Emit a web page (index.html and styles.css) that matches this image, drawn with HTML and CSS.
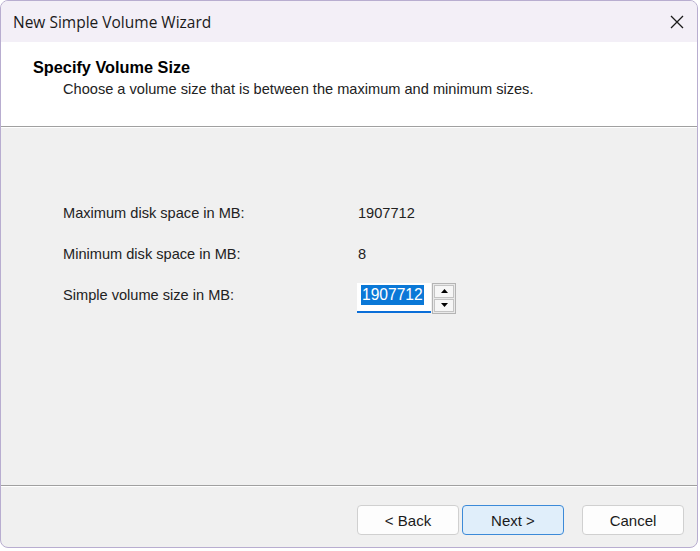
FILE: index.html
```html
<!DOCTYPE html>
<html lang="en">
<head>
    <meta charset="UTF-8">
    <title>New Simple Volume Wizard</title>
    <link rel="stylesheet" href="styles.css">
</head>
<body>
    <div class="window">
        <div class="titlebar">
            <span class="title">New Simple Volume Wizard</span>
            <svg class="close" width="16" height="16" viewBox="0 0 16 16">
                <path d="M2 2 L14 14 M14 2 L2 14" stroke="#1a1a1a" stroke-width="1.3" fill="none"/>
            </svg>
        </div>

        <header class="page-head">
            <h1>Specify Volume Size</h1>
            <p>Choose a volume size that is between the maximum and minimum sizes.</p>
        </header>

        <section class="content">
            <div class="row">
                <span class="label">Maximum disk space in MB:</span>
                <span class="value">1907712</span>
            </div>
            <div class="row">
                <span class="label">Minimum disk space in MB:</span>
                <span class="value">8</span>
            </div>
            <div class="row">
                <span class="label">Simple volume size in MB:</span>
                <div class="spin">
                    <div class="spin-field"><span class="selected">1907712</span></div>
                    <div class="spin-buttons">
                        <button class="spin-btn"><svg width="7" height="4" viewBox="0 0 7 4"><path d="M3.5 0 L7 4 L0 4 Z" fill="#000"/></svg></button>
                        <button class="spin-btn"><svg width="7" height="4" viewBox="0 0 7 4"><path d="M0 0 L7 0 L3.5 4 Z" fill="#000"/></svg></button>
                    </div>
                </div>
            </div>
        </section>

        <footer class="actions">
            <button class="btn">&lt; Back</button>
            <button class="btn default">Next &gt;</button>
            <button class="btn cancel">Cancel</button>
        </footer>
    </div>
</body>
</html>
```

FILE: styles.css
```css
html, body {
    margin: 0;
    padding: 0;
    background: #fff;
}
body {
    font-family: 'Liberation Sans', Arial, sans-serif;
    color: #1a1a1a;
}
.window {
    width: 698px;
    height: 548px;
    box-sizing: border-box;
    border: 1px solid #b8add0;
    border-radius: 8px;
    overflow: hidden;
    display: flex;
    flex-direction: column;
    background: #f0f0f0;
}
.titlebar {
    height: 41px;
    background: #f3eff7;
    display: flex;
    align-items: center;
    justify-content: space-between;
    padding: 0 12px 0 12px;
    flex-shrink: 0;
}
.title {
    font-family: 'Open Sans', 'Noto Sans', sans-serif;
    font-size: 15.5px;
    color: #1a1a1a;
}
.close {
    margin-top: 1px;
}
.page-head {
    height: 84px;
    background: #fff;
    border-bottom: 1px solid #a0a0a0;
    box-shadow: 0 1px 0 #fff;
    flex-shrink: 0;
}
.page-head h1 {
    margin: 16px 0 0 32px;
    font-size: 16.3px;
    font-weight: bold;
    color: #000;
}
.page-head p {
    margin: 4px 0 0 62px;
    font-size: 14.6px;
    color: #222;
}
.content {
    flex: 1;
    padding: 76px 0 0 62px;
    border-bottom: 1px solid #a0a0a0;
    box-shadow: 0 1px 0 #fff;
}
.row {
    display: flex;
    align-items: center;
    height: 20px;
    margin-bottom: 21px;
    font-size: 14.6px;
    color: #222;
}
.label {
    width: 295px;
}
.spin {
    display: flex;
    align-items: flex-start;
    margin-left: -1px;
    margin-top: 6px;
}
.spin-field {
    width: 74px;
    height: 30px;
    background: #fff;
    border-bottom: 2px solid #0a6ed8;
    box-sizing: border-box;
    padding: 2px 0 0 4px;
}
.selected {
    display: inline-block;
    background: #0a78d7;
    color: #fff;
    font-size: 15.6px;
    line-height: 20px;
    padding: 0 1px;
}
.spin-buttons {
    display: flex;
    flex-direction: column;
    margin-left: 1px;
    border: 1px solid #b4b4b4;
    background: #e9e9e9;
    padding: 1px;
    gap: 1px;
}
.spin-btn {
    width: 20px;
    height: 13px;
    padding: 0;
    border: 1px solid #c4c4c4;
    background: #f6f6f6;
    display: flex;
    align-items: center;
    justify-content: center;
}
.actions {
    flex: 1;
    max-height: 61px;
    display: flex;
    align-items: flex-start;
    padding: 19px 0 0 356px;
    box-sizing: border-box;
    flex-shrink: 0;
}
.btn {
    width: 102px;
    height: 30px;
    border: 1px solid #d0d0d0;
    border-radius: 4px;
    background: #fdfdfd;
    font-family: 'Liberation Sans', Arial, sans-serif;
    font-size: 15px;
    color: #1a1a1a;
    margin-right: 3px;
}
.btn.default {
    background: #e0eefa;
    border: 1px solid #3c8ad8;
}
.btn.cancel {
    margin-left: 15px;
}
```
